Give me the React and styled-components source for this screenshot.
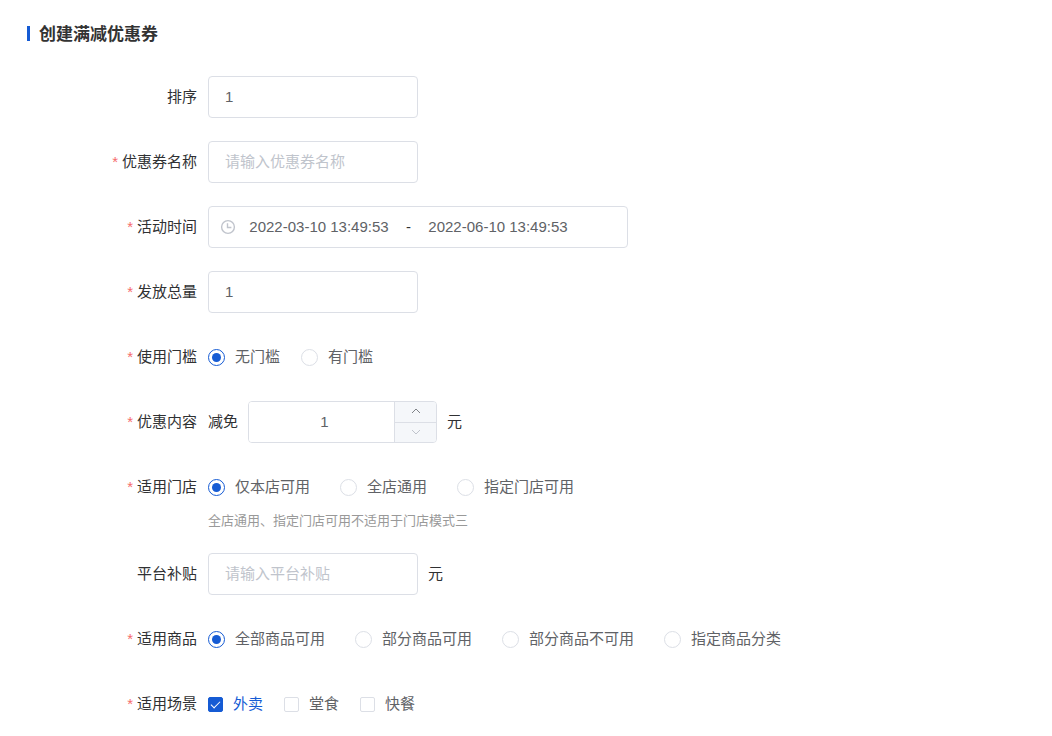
import { useState } from 'react';
import styled, { createGlobalStyle } from 'styled-components';

const GlobalStyle = createGlobalStyle`
  :root {
    --color-primary: #155bd4;
    --color-text: #303133;
    --color-regular: #606266;
    --color-hint: #999;
    --color-placeholder: #c0c4cc;
    --color-border: #dcdfe6;
    --color-red: #f56c6c;
  }
  * {
    box-sizing: border-box;
  }
  body {
    margin: 0;
    background: #fff;
    color: var(--color-text);
    font-family: "Liberation Sans", "Noto Sans CJK SC", sans-serif;
    font-size: 15px;
  }
  input, button {
    font: inherit;
    margin: 0;
  }
`;

const Page = styled.main`
  padding: 23px 27px;
`;

const Title = styled.h1`
  display: flex;
  gap: 9px;
  margin: 0 0 29px;
  font-size: 17px;
  line-height: 24px;
  color: #333;
  &::before {
    content: '';
    width: 3px;
    height: 15px;
    margin-top: 3px;
    background: var(--color-primary);
  }
`;

const Form = styled.form`
  display: grid;
  row-gap: 23px;
`;

const FormItem = styled.div`
  display: grid;
  grid-template-columns: 170px 1fr;
  column-gap: 11px;
`;

const Label = styled.label`
  line-height: 42px;
  text-align: right;
  white-space: nowrap;
  ${({ $required }) => $required ?
  `
    &::before {
      content: '*';
      margin-right: 4px;
      color: var(--color-red);
    }
  ` : null }
`;

const Content = styled.div`
  display: flex;
  flex-wrap: wrap;
  align-items: center;
  gap: ${({ $gap }) => $gap || 10}px;
  min-height: 42px;
  line-height: 20px;
`;

const TextInput = styled.input`
  width: 210px;
  height: 42px;
  padding: 0 16px 2px;
  border: 1px solid var(--color-border);
  border-radius: 4px;
  outline: 0;
  color: var(--color-regular);
  &::placeholder {
    color: var(--color-placeholder);
  }
  &:focus {
    border-color: var(--color-primary);
  }
`;

const DateRange = styled.div`
  display: flex;
  align-items: center;
  width: 420px;
  height: 42px;
  padding: 0 11px;
  border: 1px solid var(--color-border);
  border-radius: 4px;
  svg {
    flex: none;
    margin-right: 4px;
  }
`;

const DateInput = styled.input`
  width: 158px;
  padding: 0;
  border: 0;
  outline: 0;
  text-align: center;
  color: var(--color-regular);
`;

const Separator = styled.span`
  width: 21px;
  text-align: center;
`;

const NumberBox = styled.div`
  display: grid;
  grid-template-columns: 1fr 42px;
  width: 189px;
  height: 42px;
  border: 1px solid var(--color-border);
  border-radius: 4px;
  overflow: hidden;
`;

const NumberInput = styled.input`
  min-width: 0;
  padding: 0 0 0 6px;
  border: 0;
  outline: 0;
  text-align: center;
  color: var(--color-regular);
`;

const Steps = styled.div`
  display: grid;
  grid-template-rows: 1fr 1fr;
  border-left: 1px solid var(--color-border);
`;

const StepButton = styled.button`
  display: grid;
  place-items: center;
  padding: 0 0 2px;
  border: 0;
  background: #f5f7fa;
  color: #808388;
  cursor: pointer;
  & + & {
    border-top: 1px solid var(--color-border);
  }
  &:disabled {
    color: var(--color-placeholder);
    cursor: not-allowed;
  }
`;

const Option = styled.label`
  display: flex;
  align-items: center;
  gap: 10px;
  line-height: 20px;
  color: var(--color-regular);
  cursor: pointer;
`;

const CheckOption = styled(Option)`
  &:has(:checked) {
    color: var(--color-primary);
  }
`;

const Radio = styled.input`
  appearance: none;
  display: grid;
  place-items: center;
  width: 17px;
  height: 17px;
  border: 1px solid var(--color-border);
  border-radius: 50%;
  &:checked {
    border-color: var(--color-primary);
  }
  &:checked::after {
    content: '';
    width: 9px;
    height: 9px;
    border-radius: 50%;
    background: var(--color-primary);
  }
`;

const Checkbox = styled.input`
  appearance: none;
  display: grid;
  justify-items: center;
  width: 15px;
  height: 15px;
  border: 1px solid var(--color-border);
  border-radius: 2px;
  &:checked {
    border-color: var(--color-primary);
    background: var(--color-primary);
  }
  &:checked::after {
    content: '';
    width: 4px;
    height: 8px;
    margin-top: 1px;
    border: solid #fff;
    border-width: 0 1px 1px 0;
    transform: rotate(45deg);
  }
`;

const Hint = styled.p`
  margin: 4px 0 0;
  font-size: 13px;
  line-height: 18px;
  color: var(--color-hint);
`;

const ClockIcon = () => (
  <svg width="16" height="16" viewBox="0 0 16 16" fill="none" stroke="#c0c4cc" strokeWidth="1.4" aria-hidden="true">
    <circle cx="8" cy="8" r="6.4" />
    <path d="M7.5 4.2V8.5H11.4" />
  </svg>
);

const Arrow = ({ down }) => (
  <svg width="10" height="6" viewBox="0 0 10 6" fill="none" stroke="currentColor" strokeWidth="1" aria-hidden="true">
    <path d={down ? 'M1 1L5 5L9 1' : 'M1 5L5 1L9 5'} />
  </svg>
);

const RadioRow = ({ name, label, options, gap, hint }) => {
  const [value, setValue] = useState(options[0]);

  return (
    <FormItem role="radiogroup" aria-labelledby={`${name}-label`}>
      <Label as="span" id={`${name}-label`} $required>{label}</Label>
      <div>
        <Content $gap={gap}>
          {options.map(option => (
            <Option key={option}>
              <Radio type="radio" name={name} checked={value === option} onChange={() => setValue(option)} />
              {option}
            </Option>
          ))}
        </Content>
        {hint ? <Hint>{hint}</Hint> : null}
      </div>
    </FormItem>
  );
};

const InputRow = ({ id, label, required, suffix, ...props }) => (
  <FormItem>
    <Label htmlFor={id} $required={required}>{label}</Label>
    <Content>
      <TextInput id={id} type="text" {...props} />
      {suffix ? <span>{suffix}</span> : null}
    </Content>
  </FormItem>
);

const App = () => {
  const [amount, setAmount] = useState(1);

  return (
    <Page>
      <GlobalStyle />
      <Title>创建满减优惠券</Title>
      <Form>
        <InputRow id="sort" label="排序" defaultValue="1" />
        <InputRow id="name" label="优惠券名称" placeholder="请输入优惠券名称" required />
        <FormItem>
          <Label htmlFor="start" $required>活动时间</Label>
          <Content>
            <DateRange>
              <ClockIcon />
              <DateInput id="start" defaultValue="2022-03-10 13:49:53" />
              <Separator>-</Separator>
              <DateInput aria-label="结束时间" defaultValue="2022-06-10 13:49:53" />
            </DateRange>
          </Content>
        </FormItem>
        <InputRow id="total" label="发放总量" defaultValue="1" required />
        <RadioRow name="threshold" label="使用门槛" options={['无门槛', '有门槛']} gap={21} />
        <FormItem>
          <Label htmlFor="amount" $required>优惠内容</Label>
          <Content>
            <span>减免</span>
            <NumberBox>
              <NumberInput
                id="amount"
                inputMode="numeric"
                value={amount}
                onChange={e => setAmount(Number(e.target.value) || 1)}
              />
              <Steps>
                <StepButton type="button" aria-label="增加" onClick={() => setAmount(amount + 1)}>
                  <Arrow />
                </StepButton>
                <StepButton type="button" aria-label="减少" disabled={amount <= 1} onClick={() => setAmount(amount - 1)}>
                  <Arrow down />
                </StepButton>
              </Steps>
            </NumberBox>
            <span>元</span>
          </Content>
        </FormItem>
        <RadioRow
          name="store"
          label="适用门店"
          options={['仅本店可用', '全店通用', '指定门店可用']}
          gap={30}
          hint="全店通用、指定门店可用不适用于门店模式三"
        />
        <InputRow id="subsidy" label="平台补贴" placeholder="请输入平台补贴" suffix="元" />
        <RadioRow
          name="goods"
          label="适用商品"
          options={['全部商品可用', '部分商品可用', '部分商品不可用', '指定商品分类']}
          gap={30}
        />
        <FormItem role="group" aria-labelledby="scene-label">
          <Label as="span" id="scene-label" $required>适用场景</Label>
          <Content $gap={21}>
            {['外卖', '堂食', '快餐'].map((scene, i) => (
              <CheckOption key={scene}>
                <Checkbox type="checkbox" name="scene" value={scene} defaultChecked={i === 0} />
                {scene}
              </CheckOption>
            ))}
          </Content>
        </FormItem>
      </Form>
    </Page>
  );
};

export default App;
